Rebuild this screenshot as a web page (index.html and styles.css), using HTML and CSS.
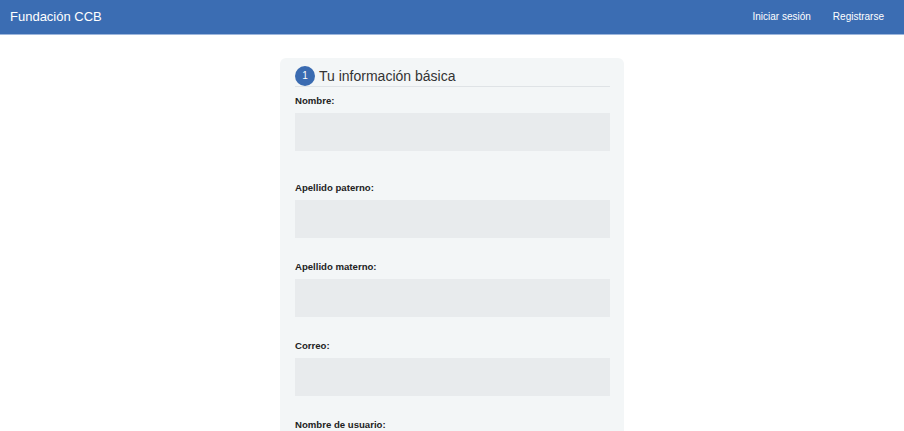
FILE: index.html
```html
<!DOCTYPE html>
<html lang="es">
<head>
<meta charset="utf-8">
<title>Fundación CCB</title>
<link rel="stylesheet" href="styles.css">
</head>
<body>
<nav class="navbar">
  <a class="brand" href="#">Fundación CCB</a>
  <div class="nav-links">
    <a href="#">Iniciar sesión</a>
    <a href="#">Registrarse</a>
  </div>
</nav>
<main class="page">
  <section class="card">
    <div class="card-head">
      <span class="step">1</span>
      <h2>Tu información básica</h2>
    </div>
    <form class="form">
      <div class="group first">
        <label>Nombre:</label>
        <div class="input"></div>
      </div>
      <div class="group">
        <label>Apellido paterno:</label>
        <div class="input"></div>
      </div>
      <div class="group">
        <label>Apellido materno:</label>
        <div class="input"></div>
      </div>
      <div class="group">
        <label>Correo:</label>
        <div class="input"></div>
      </div>
      <div class="group">
        <label>Nombre de usuario:</label>
        <div class="input"></div>
      </div>
      <div class="group">
        <label>Contraseña:</label>
        <div class="input"></div>
      </div>
    </form>
  </section>
</main>
</body>
</html>
```

FILE: styles.css
```css
* { box-sizing: border-box; }
html, body { margin: 0; padding: 0; background: #ffffff; }
body {
  font-family: "Liberation Sans", Arial, Helvetica, sans-serif;
  color: #222;
  overflow: hidden;
}
.navbar {
  height: 35px;
  background: #3b6db3;
  border-bottom: 1px solid #9db6dc;
  display: flex;
  align-items: center;
  justify-content: space-between;
  padding: 0 20px 1px 10px;
}
.brand {
  color: #fff;
  font-size: 13px;
  text-decoration: none;
  line-height: 16px;
}
.nav-links {
  display: flex;
  gap: 22px;
}
.nav-links a {
  color: #fff;
  font-size: 10px;
  text-decoration: none;
  line-height: 14px;
}
.page {
  display: flex;
  justify-content: center;
  padding-top: 23px;
}
.card {
  width: 344px;
  background: #f3f6f7;
  border-radius: 6px;
  padding: 8px 14px 40px 15px;
}
.card-head {
  display: flex;
  align-items: center;
  height: 21px;
  border-bottom: 1px solid #dfe3e6;
  padding-bottom: 1px;
}
.step {
  width: 20px;
  height: 20px;
  border-radius: 50%;
  background: #3a6bb1;
  color: #fff;
  font-size: 10px;
  display: flex;
  align-items: center;
  justify-content: center;
  margin-right: 4px;
}
.card-head h2 {
  margin: 0;
  font-size: 14px;
  font-weight: normal;
  color: #333;
  line-height: 18px;
}
.form {
  padding-top: 8px;
}
.group {
  margin-bottom: 23px;
}
.group.first {
  margin-bottom: 31px;
}
.group label {
  display: block;
  font-size: 9.6px;
  font-weight: bold;
  line-height: 12px;
  color: #222;
  margin-bottom: 6px;
}
.input {
  height: 38px;
  background: #e8ebed;
}
```
